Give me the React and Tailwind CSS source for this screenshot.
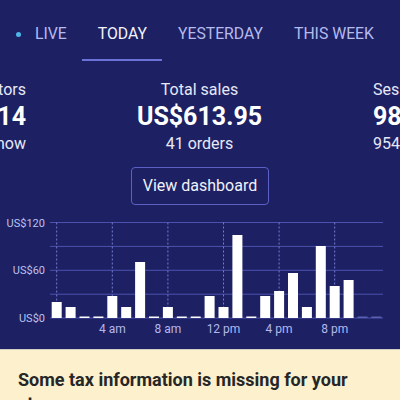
const bars = [16, 11, 1.5, 1.5, 22, 11, 56, 1.5, 11, 1.5, 1.5, 22, 11, 83, 1.5, 22, 27, 45, 11, 72, 32, 38];
const gridY = [17.5, 41.4, 65.3, 89.2, 113];
const ticks = [
  { i: 0, label: null },
  { i: 4, label: "4 am" },
  { i: 8, label: "8 am" },
  { i: 12, label: "12 pm" },
  { i: 16, label: "4 pm" },
  { i: 20, label: "8 pm" },
];
const barX = (i) => 56.7 + 13.9 * i;

const SalesChart = () => (
  <svg width="400" height="144" viewBox="0 0 400 144" className="block">
    {gridY.map((y) => (
      <line key={y} x1="50" x2="383" y1={y} y2={y} stroke="#4b51ad" strokeWidth="1" />
    ))}
    {ticks.map((t) => (
      <line
        key={t.i}
        x1={barX(t.i)}
        x2={barX(t.i)}
        y1="17.5"
        y2="113"
        stroke="#747ad0"
        strokeWidth="1"
        strokeDasharray="2 2"
      />
    ))}
    {bars.map((h, i) => (
      <rect key={i} x={barX(i) - 5} y={113 - h} width="10" height={h} fill="#ffffff" />
    ))}
    {[22, 23].map((i) => (
      <rect key={i} x={barX(i) - 5} y="111.5" width="10" height="1.5" fill="#5a60b0" />
    ))}
    <g fill="#bcc0ee" fontSize="11" fontFamily="Roboto, sans-serif" textAnchor="end">
      <text x="45" y="21.5">US$120</text>
      <text x="45" y="69.3">US$60</text>
      <text x="45" y="117">US$0</text>
    </g>
    <g fill="#b3b8ea" fontSize="12" fontFamily="Roboto, sans-serif" textAnchor="middle">
      {ticks.filter((t) => t.label).map((t) => (
        <text key={t.i} x={barX(t.i)} y="128.3">{t.label}</text>
      ))}
    </g>
  </svg>
);

export default function App() {
  return (
    <div className="w-[400px] h-[400px] overflow-hidden bg-[#fcf0cd] font-['Roboto',sans-serif]">
      <div className="bg-[#1d2163] h-[349px] flex flex-col">
        <div className="flex pt-[24px] text-[15.75px] leading-5 whitespace-nowrap">
          <div className="flex flex-col pb-[15px] border-b-2 border-transparent pl-4 pr-[15.5px]">
            <div className="flex items-center text-[#b6bbee]">
              <span className="w-[5px] h-[5px] rounded-full bg-[#4fb6e6]" />
              <span className="ml-[14px]">LIVE</span>
            </div>
          </div>
          <div className="px-[15.5px] pb-[15px] border-b-2 border-[#6b71d6] text-[#f2f3fb]">TODAY</div>
          <div className="px-[15.5px] pb-[15px] border-b-2 border-transparent text-[#b6bbee]">YESTERDAY</div>
          <div className="px-[15.5px] pb-[15px] border-b-2 border-transparent text-[#b6bbee]">THIS WEEK</div>
        </div>

        <div className="flex mt-[19px] whitespace-nowrap">
          <div className="w-[26px] flex flex-col items-end">
            <div className="text-[16px] leading-5 text-[#e6e8f8]">Visitors</div>
            <div className="mt-[2px] text-[25px] leading-[30px] font-bold text-white">14</div>
            <div className="mt-[2px] text-[16px] leading-5 text-[#e6e8f8]">Right now</div>
          </div>
          <div className="flex-1 flex flex-col items-center">
            <div className="text-[16px] leading-5 text-[#e6e8f8]">Total sales</div>
            <div className="mt-[2px] text-[25px] leading-[30px] font-bold text-white">US$613.95</div>
            <div className="mt-[2px] text-[16px] leading-5 text-[#e6e8f8]">41 orders</div>
          </div>
          <div className="w-[27px] flex flex-col items-start">
            <div className="text-[16px] leading-5 text-[#e6e8f8]">Sessions</div>
            <div className="mt-[2px] text-[25px] leading-[30px] font-bold text-white">98</div>
            <div className="mt-[2px] text-[16px] leading-5 text-[#e6e8f8]">954</div>
          </div>
        </div>

        <div className="flex justify-center mt-[13px]">
          <button className="w-[138px] h-[38px] rounded-[4px] border border-[#5a60c4] text-[16px] text-[#f0f1fb]">
            View dashboard
          </button>
        </div>

        <SalesChart />
      </div>
      <div className="h-px bg-[#cfcdc4]" />
      <div className="px-[18px] pt-[18px] pr-[24px]">
        <p className="text-[18px] leading-6 font-bold text-[#262626]">
          Some tax information is missing for your store
        </p>
      </div>
    </div>
  );
}
